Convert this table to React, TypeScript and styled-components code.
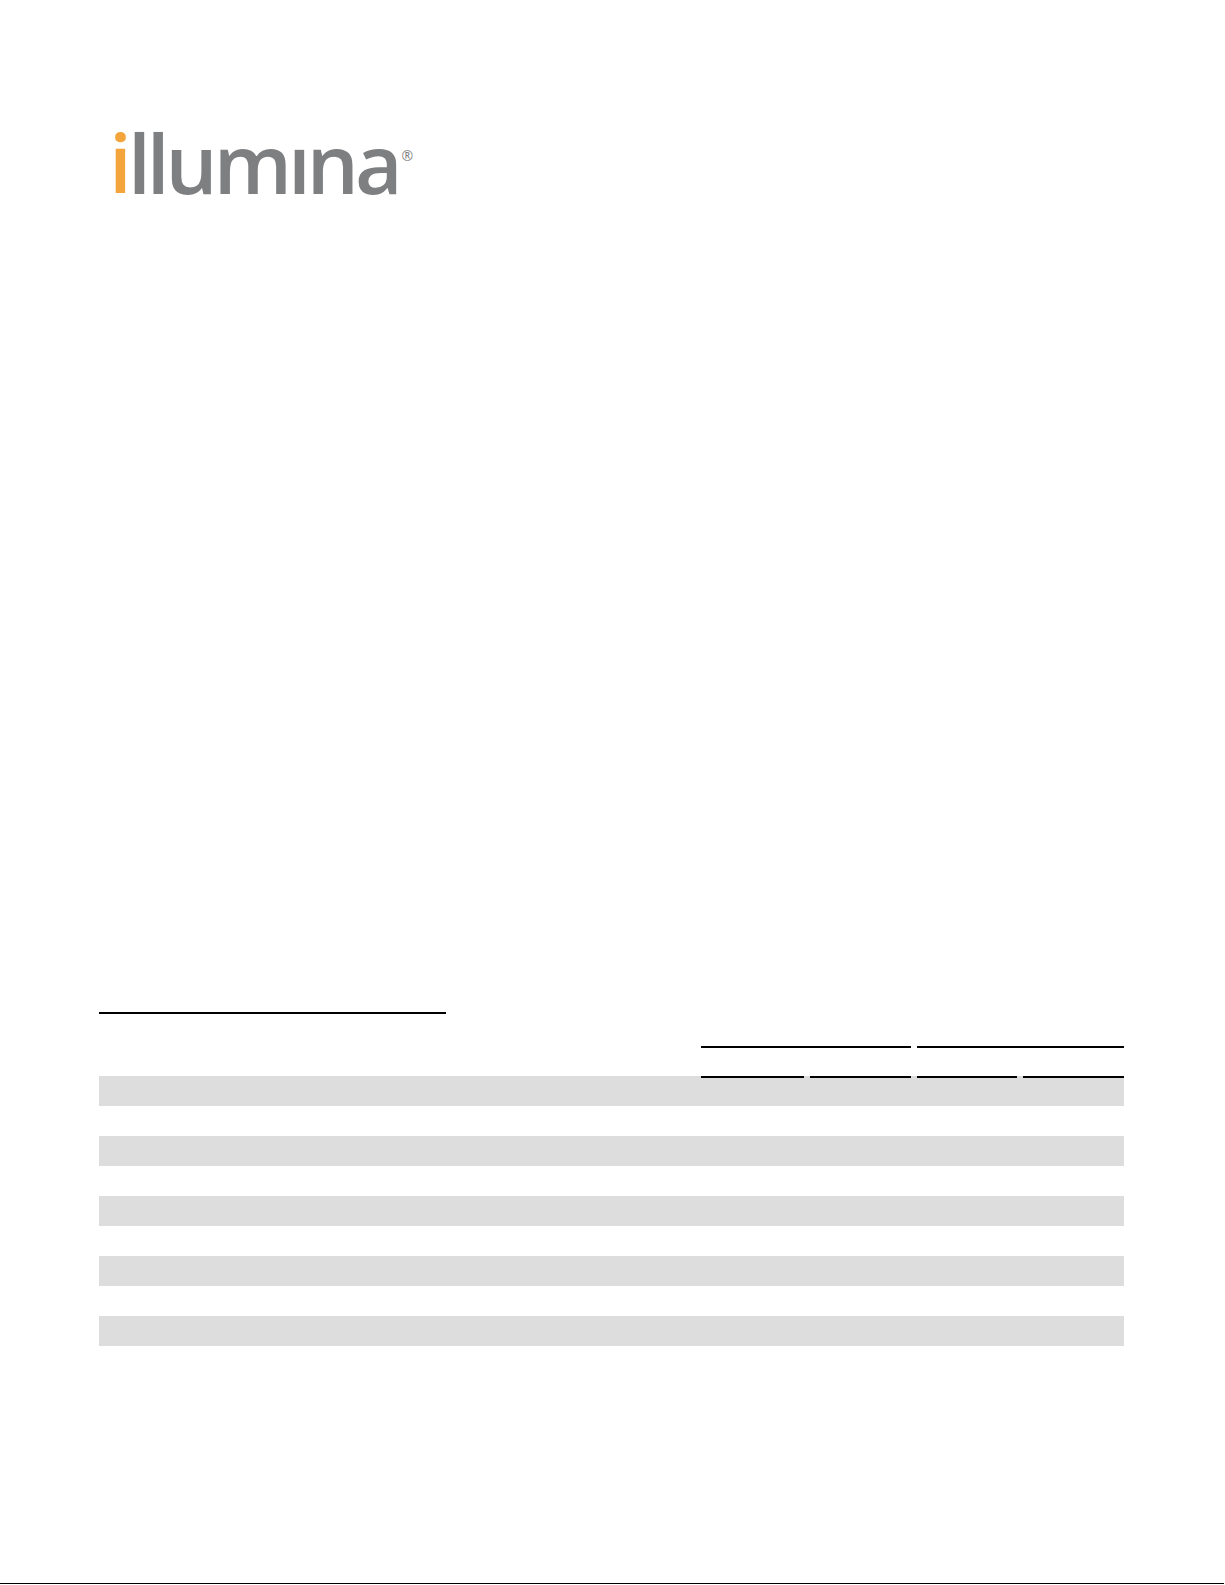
import React from "react"
import styled, { createGlobalStyle } from "styled-components"

const GlobalStyle = createGlobalStyle`
    html, body {
        margin: 0;
        padding: 0;
        background-color: #ffffff;
    }
    * {
        box-sizing: border-box;
    }
`

const groups = ["", ""]
const subColumns = ["", "", "", ""]
const rowCount = 9

const App = () => {
    return (
        <>
            <GlobalStyle />
            <Page>
                <Logo>
                    <LogoDot>i</LogoDot>llumına<Registered>®</Registered>
                </Logo>
                <SectionTitle />
                <Table>
                    <GroupRow>
                        <Cell />
                        {groups.map((g, i) => (
                            <GroupHead key={i}>{g}</GroupHead>
                        ))}
                    </GroupRow>
                    <SubRow>
                        <Cell />
                        {subColumns.map((c, i) => (
                            <SubHead key={i}>{c}</SubHead>
                        ))}
                    </SubRow>
                    {Array.from({ length: rowCount }).map((_, r) => (
                        <DataRow key={r} $shaded={r % 2 === 0}>
                            <Cell />
                            {subColumns.map((_, i) => (
                                <Cell key={i} />
                            ))}
                        </DataRow>
                    ))}
                </Table>
            </Page>
        </>
    )
}

const Page = styled.div`
    width: 1224px;
    height: 1584px;
    padding: 0 100px 0 99px;
    border-bottom: 1px solid #000000;
    font-family: "Liberation Sans", Arial, sans-serif;
    overflow: hidden;
`

const Logo = styled.div`
    margin: 121px 0 0 10px;
    height: 82px;
    font-family: "Open Sans", "Noto Sans", sans-serif;
    font-size: 82px;
    font-weight: 600;
    line-height: 82px;
    letter-spacing: -4px;
    color: #7e7f81;
    white-space: nowrap;
`

const LogoDot = styled.span`
    color: #f3a43b;
`

const Registered = styled.sup`
    font-size: 14px;
    font-weight: 400;
    letter-spacing: 0;
    vertical-align: top;
    position: relative;
    top: -6px;
    left: 3px;
`

const SectionTitle = styled.div`
    width: 347px;
    height: 30px;
    margin-top: 781px;
    border-bottom: 2px solid #000000;
`

const Table = styled.div`
    display: flex;
    flex-direction: column;
    width: 1025px;
`

const columns = `
    display: grid;
    grid-template-columns: 596px 103px 101px 100px 101px;
    column-gap: 6px;
`

const GroupRow = styled.div`
    ${columns}
    height: 34px;
`

const GroupHead = styled.div`
    grid-column: span 2;
    border-bottom: 2px solid #000000;
`

const SubRow = styled.div`
    ${columns}
    height: 30px;
    margin-bottom: -2px;
    position: relative;
    z-index: 1;
`

const SubHead = styled.div`
    border-bottom: 2px solid #000000;
`

const DataRow = styled.div<{ $shaded: boolean }>`
    ${columns}
    height: 30px;
    background-color: ${(p) => (p.$shaded ? "#dddddd" : "transparent")};
`

const Cell = styled.div`
    font-size: 14px;
`

export default App
